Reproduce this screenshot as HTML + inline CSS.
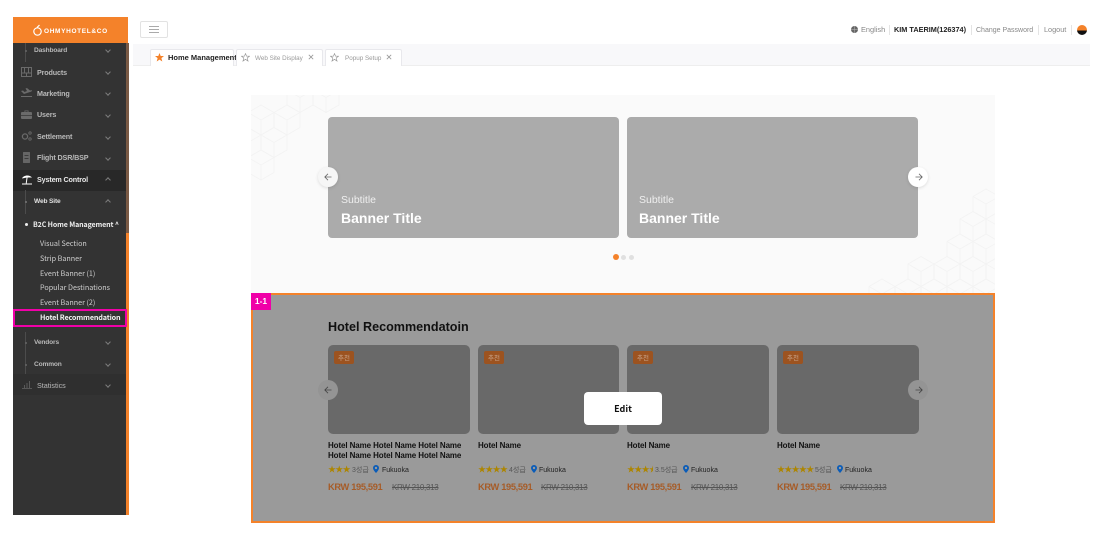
<!DOCTYPE html>
<html>
<head>
<meta charset="utf-8">
<style>
html,body{margin:0;padding:0;background:#fff;}
body{width:1102px;height:546px;position:relative;overflow:hidden;font-family:"Liberation Sans","Noto Sans CJK KR",sans-serif;}
.a{position:absolute;white-space:nowrap;}
.m{position:absolute;white-space:nowrap;color:#b8b8b8;font-size:7.2px;font-weight:bold;line-height:10px;letter-spacing:-.15px;}
.s{font-size:6.6px;font-weight:bold;letter-spacing:-.15px;}
.n{position:absolute;left:40px;white-space:nowrap;color:#cfcfcf;font-family:"Noto Sans CJK KR",sans-serif;font-size:7.2px;line-height:10px;}
.chev{position:absolute;left:105.5px;width:3px;height:3px;border-right:1px solid #7c7c7c;border-bottom:1px solid #7c7c7c;transform:rotate(45deg);}
.chev.up{transform:rotate(225deg);}
.ic{position:absolute;left:21px;}
.tab{position:absolute;top:49px;height:17px;background:#fff;border:1px solid #e8e8ec;border-bottom:none;box-sizing:border-box;border-radius:2px 2px 0 0;}
.card{position:absolute;background:#ababab;border-radius:4px;width:291px;height:121px;top:117px;}
.hc{position:absolute;top:345px;width:142px;height:89px;background:#696969;border-radius:5px;}
.tag{position:absolute;top:351px;width:20px;height:13px;background:#9c5320;border-radius:2px;color:#c9a58c;font-size:6.5px;line-height:13px;text-align:center;font-family:"Noto Sans CJK KR",sans-serif;}
.hn{position:absolute;font-size:8px;letter-spacing:-.1px;font-weight:bold;color:#111;line-height:10px;white-space:nowrap;}
.st{position:absolute;top:465px;font-size:8px;line-height:10px;color:#ad8500;white-space:nowrap;letter-spacing:-.7px;}
.gr{position:absolute;top:466px;font-size:7px;line-height:10px;color:#555;font-family:"Liberation Sans","Noto Sans CJK KR",sans-serif;white-space:nowrap;}
.ci{position:absolute;top:466px;font-size:7px;line-height:10px;color:#222;white-space:nowrap;}
.pr{position:absolute;top:481px;font-size:9.3px;letter-spacing:-.35px;line-height:12px;font-weight:bold;color:#a65c28;white-space:nowrap;}
.op{position:absolute;top:482px;font-size:8px;letter-spacing:-.29px;line-height:12px;color:#555;text-decoration:line-through;white-space:nowrap;}
.circ{position:absolute;width:20px;height:20px;border-radius:50%;}
</style>
</head>
<body>

<!-- sidebar -->
<div class="a" style="left:13px;top:17px;width:113px;height:498px;background:#333;"></div>
<div class="a" style="left:13px;top:170px;width:113px;height:21px;background:#282828;"></div>
<div class="a" style="left:13px;top:374px;width:113px;height:21px;background:#2f2f2f;"></div>
<div class="a" style="left:126px;top:43px;width:3px;height:190px;background:#7a5a45;"></div>
<div class="a" style="left:126px;top:233px;width:3px;height:282px;background:#f4822a;"></div>
<div class="a" style="left:13px;top:17px;width:115px;height:26px;background:#f4822a;"></div>
<svg class="a" style="left:32px;top:24px;" width="11" height="13" fill="none" stroke="#fff" stroke-width="1.2"><circle cx="5.5" cy="7.5" r="3.7"/><path d="M5 3.5L7.5 1"/></svg>
<div class="a" style="left:44px;top:26.5px;color:#fff;font-size:6.5px;font-weight:bold;line-height:10px;letter-spacing:.65px;">OHMYHOTEL&amp;CO</div>

<div class="a" style="left:25px;top:43px;width:1px;height:19px;background:#4c4c4c;"></div>
<div class="a" style="left:25px;top:190px;width:1px;height:24px;background:#4c4c4c;"></div>
<div class="a" style="left:25px;top:332px;width:1px;height:42px;background:#4c4c4c;"></div>
<div class="a" style="left:25px;top:50px;width:2px;height:2px;border-radius:50%;background:#666;"></div>
<div class="a" style="left:25px;top:201px;width:2px;height:2px;border-radius:50%;background:#777;"></div>
<div class="a" style="left:25px;top:342px;width:2px;height:2px;border-radius:50%;background:#666;"></div>
<div class="a" style="left:25px;top:364px;width:2px;height:2px;border-radius:50%;background:#666;"></div>

<div class="m s" style="left:34px;top:46px;">Dashboard</div><div class="chev" style="top:48px;"></div>

<svg class="ic" style="top:67px;" width="11" height="10" fill="none" stroke="#6a6a6a"><path d="M.5.5H10.5V9.5H.5Z"/><path d="M3.5 1V6M7.5 1V6M1 6H10M5.5 6V9" /></svg>
<div class="m" style="left:37px;top:68px;">Products</div><div class="chev" style="top:70px;"></div>

<svg class="ic" style="top:88px;" width="11" height="10" fill="#6a6a6a"><path d="M0 3L2 2.5L3.5 4L6 3L4.5 .5L6 0L9 2.5L11 2L10.5 3.5L3 6L0 3Z"/><rect y="8" width="11" height="1"/></svg>
<div class="m" style="left:37px;top:88.5px;">Marketing</div><div class="chev" style="top:91px;"></div>

<svg class="ic" style="top:110px;" width="11" height="9" fill="#6a6a6a"><rect y="2" width="11" height="7" rx="1"/><path d="M3.5 2V.5H7.5V2H6.7V1.2H4.3V2Z"/><rect y="5" width="11" height=".7" fill="#333"/></svg>
<div class="m" style="left:37px;top:110px;">Users</div><div class="chev" style="top:113px;"></div>

<svg class="ic" style="top:131px;" width="11" height="10" fill="none" stroke="#6a6a6a" stroke-width="1.3"><circle cx="4" cy="5.5" r="2.6"/><circle cx="9" cy="2" r="1.2" stroke-width=".9"/><circle cx="9" cy="8" r="1.2" stroke-width=".9"/></svg>
<div class="m" style="left:37px;top:131.5px;">Settlement</div><div class="chev" style="top:135px;"></div>

<svg class="ic" style="top:152px;left:23px;" width="7" height="11" fill="#666"><rect width="7" height="11" rx=".5"/><rect x="1.5" y="3" width="4" height=".8" fill="#333"/><rect x="1.5" y="6" width="4" height=".8" fill="#333"/></svg>
<div class="m" style="left:37px;top:152.5px;">Flight DSR/BSP</div><div class="chev" style="top:156px;"></div>

<svg class="a" style="left:21px;top:174px;" width="12" height="11" fill="#fff"><path d="M1 4.5C2 1.5 8 0 11 3.5L6 3.5Z"/><rect x="5.2" y="3" width="1" height="6.5" transform="rotate(8 5.7 6)"/><rect x="1" y="9.5" width="10" height="1"/></svg>
<div class="m" style="left:37px;top:175px;color:#e8e8e8;">System Control</div><div class="chev up" style="top:178px;"></div>

<div class="m s" style="left:34px;top:196.5px;color:#e0e0e0;">Web Site</div><div class="chev up" style="top:200px;"></div>
<div class="a" style="left:25px;top:223px;width:3px;height:3px;border-radius:50%;background:#eee;"></div>
<div class="n" style="left:33px;top:220px;color:#eee;font-weight:bold;font-size:7px;letter-spacing:-.1px;">B2C Home Management ^</div>
<div class="n" style="top:239px;">Visual Section</div>
<div class="n" style="top:254px;">Strip Banner</div>
<div class="n" style="top:269px;">Event Banner (1)</div>
<div class="n" style="top:283px;">Popular Destinations</div>
<div class="n" style="top:298px;">Event Banner (2)</div>
<div class="n" style="top:313px;color:#f2f2f2;font-weight:bold;font-size:7.2px;letter-spacing:-.15px;">Hotel Recommendation</div>
<div class="a" style="left:13px;top:309px;width:114px;height:18px;border:2px solid #f000a8;box-sizing:border-box;"></div>

<div class="m s" style="left:34px;top:337.5px;">Vendors</div><div class="chev" style="top:340px;"></div>
<div class="m s" style="left:34px;top:359.5px;">Common</div><div class="chev" style="top:362px;"></div>
<svg class="ic" style="top:380px;left:22px;" width="10" height="9" fill="none" stroke="#666" stroke-width=".8"><path d="M0 8.5H10M2.5 8V5M5 8V3M7.5 8V1"/></svg>
<div class="m" style="left:37px;top:380.5px;font-weight:normal;letter-spacing:0;">Statistics</div><div class="chev" style="top:383px;"></div>

<!-- topbar -->
<div class="a" style="left:140px;top:21px;width:28px;height:17px;border:1px solid #e2e2e2;border-radius:2px;box-sizing:border-box;"></div>
<div class="a" style="left:149px;top:26px;width:10px;height:1px;background:#aaa;"></div>
<div class="a" style="left:149px;top:29px;width:10px;height:1px;background:#aaa;"></div>
<div class="a" style="left:149px;top:32px;width:10px;height:1px;background:#aaa;"></div>

<svg class="a" style="left:851px;top:26px;" width="7" height="7" fill="#666"><circle cx="3.5" cy="3.5" r="3.5"/><path d="M0 3.5H7M3.5 0V7" stroke="#bbb" stroke-width=".5"/></svg>
<div class="a" style="left:861px;top:25px;font-size:7.4px;line-height:10px;color:#888;">English</div>
<div class="a" style="left:889px;top:25px;width:1px;height:10px;background:#e4e4e4;"></div>
<div class="a" style="left:894px;top:25px;font-size:7.3px;line-height:10px;font-weight:bold;color:#222;">KIM TAERIM(126374)</div>
<div class="a" style="left:971px;top:25px;width:1px;height:10px;background:#e4e4e4;"></div>
<div class="a" style="left:976px;top:26px;font-size:7px;line-height:10px;color:#888;">Change Password</div>
<div class="a" style="left:1038px;top:25px;width:1px;height:10px;background:#e4e4e4;"></div>
<div class="a" style="left:1044px;top:25px;font-size:7.3px;line-height:10px;color:#888;">Logout</div>
<div class="a" style="left:1071px;top:25px;width:1px;height:10px;background:#e4e4e4;"></div>
<div class="a" style="left:1077px;top:25px;width:10px;height:10px;border-radius:50%;background:linear-gradient(#f4822a 0,#f4822a 55%,#111 55%,#111 100%);"></div>

<!-- tabs -->
<div class="a" style="left:133px;top:44px;width:957px;height:22px;background:#f8f8fa;border-bottom:1px solid #eeeeee;box-sizing:border-box;"></div>
<div class="tab" style="left:150px;width:84px;"></div>
<svg class="a" style="left:155px;top:53px;" width="9" height="9" fill="#f4822a"><path d="M4.5 0L5.7 3H9L6.4 5.1L7.3 8.5L4.5 6.6L1.7 8.5L2.6 5.1L0 3H3.3Z"/></svg>
<div class="a" style="left:168px;top:53px;font-size:7.5px;line-height:10px;font-weight:bold;color:#222;">Home Management</div>
<div class="tab" style="left:236px;width:87px;"></div>
<svg class="a" style="left:241px;top:53px;" width="9" height="9" fill="none" stroke="#999" stroke-width=".7"><path d="M4.5 .6L5.6 3.2H8.5L6.2 5L7 8L4.5 6.3L2 8L2.8 5L.5 3.2H3.4Z"/></svg>
<div class="a" style="left:255px;top:53.5px;font-size:6.3px;line-height:10px;color:#999;">Web Site Display</div>
<svg class="a" style="left:308px;top:54px;" width="6" height="6" stroke="#999" stroke-width=".8"><path d="M.8 .8L5.2 5.2M5.2 .8L.8 5.2"/></svg>
<div class="tab" style="left:325px;width:77px;"></div>
<svg class="a" style="left:330px;top:53px;" width="9" height="9" fill="none" stroke="#999" stroke-width=".7"><path d="M4.5 .6L5.6 3.2H8.5L6.2 5L7 8L4.5 6.3L2 8L2.8 5L.5 3.2H3.4Z"/></svg>
<div class="a" style="left:345px;top:53.5px;font-size:6.3px;line-height:10px;color:#999;">Popup Setup</div>
<svg class="a" style="left:386px;top:54px;" width="6" height="6" stroke="#999" stroke-width=".8"><path d="M.8 .8L5.2 5.2M5.2 .8L.8 5.2"/></svg>

<!-- banner panel -->
<div class="a" style="left:251px;top:95px;width:744px;height:198px;background:#fafafa;overflow:hidden;">
<svg width="744" height="198" style="position:absolute;left:0;top:0;" fill="none" stroke="#f3f3f3" stroke-width=".8">
<defs><path id="cube" d="M0 -15L13 -7.5V7.5L0 15L-13 7.5V-7.5ZM0 0L13 -7.5M0 0L-13 -7.5M0 0V15"/></defs>
<use href="#cube" x="10" y="70"/><use href="#cube" x="23" y="47.5"/><use href="#cube" x="-3" y="47.5"/><use href="#cube" x="36" y="25"/><use href="#cube" x="10" y="25"/><use href="#cube" x="49" y="2.5"/><use href="#cube" x="75" y="2.5"/><use href="#cube" x="62" y="-20"/>
<use href="#cube" x="735" y="109"/><use href="#cube" x="722" y="131.5"/><use href="#cube" x="748" y="131.5"/><use href="#cube" x="709" y="154"/><use href="#cube" x="735" y="154"/><use href="#cube" x="670" y="176.5"/><use href="#cube" x="696" y="176.5"/><use href="#cube" x="722" y="176.5"/><use href="#cube" x="748" y="176.5"/><use href="#cube" x="631" y="199"/><use href="#cube" x="657" y="199"/><use href="#cube" x="683" y="199"/><use href="#cube" x="709" y="199"/><use href="#cube" x="735" y="199"/>
</svg>
</div>
<div class="card" style="left:328px;"></div>
<div class="card" style="left:627px;"></div>
<div class="a" style="left:341px;top:194px;font-size:10.5px;line-height:13px;color:#efefef;">Subtitle</div>
<div class="a" style="left:341px;top:210px;font-size:14px;line-height:16px;font-weight:bold;color:#fff;">Banner Title</div>
<div class="a" style="left:639px;top:194px;font-size:10.5px;line-height:13px;color:#efefef;">Subtitle</div>
<div class="a" style="left:639px;top:210px;font-size:14px;line-height:16px;font-weight:bold;color:#fff;">Banner Title</div>
<div class="circ" style="left:318px;top:167px;background:#f6f6f6;box-shadow:0 1px 3px rgba(0,0,0,.12);"></div>
<svg class="a" style="left:324px;top:173px;" width="8" height="8" fill="none" stroke="#666" stroke-width=".8"><path d="M7.5 4H.8M4 .8L.8 4L4 7.2"/></svg>
<div class="circ" style="left:908px;top:167px;background:#fff;box-shadow:0 1px 3px rgba(0,0,0,.12);"></div>
<svg class="a" style="left:915px;top:173px;" width="8" height="8" fill="none" stroke="#666" stroke-width=".8"><path d="M.5 4H7.2M4 .8L7.2 4L4 7.2"/></svg>
<div class="a" style="left:613px;top:254px;width:6px;height:6px;border-radius:50%;background:#f4822a;"></div>
<div class="a" style="left:621px;top:254.5px;width:5px;height:5px;border-radius:50%;background:#e0e0e0;"></div>
<div class="a" style="left:629px;top:254.5px;width:5px;height:5px;border-radius:50%;background:#e0e0e0;"></div>

<!-- recommendation panel -->
<div class="a" style="left:251px;top:293px;width:744px;height:230px;background:#9a9a9a;border:2px solid #f4822a;box-sizing:border-box;"></div>
<div class="a" style="left:251px;top:293px;width:20px;height:17px;background:#f000a8;color:#fff;font-size:8.5px;font-weight:bold;line-height:16px;text-align:center;">1-1</div>
<div class="a" style="left:328px;top:319px;font-size:12.6px;line-height:16px;font-weight:bold;color:#111;">Hotel Recommendatoin</div>

<div class="hc" style="left:328px;"></div>
<div class="hc" style="left:478px;width:141px;"></div>
<div class="hc" style="left:627px;"></div>
<div class="hc" style="left:777px;"></div>
<div class="tag" style="left:334px;">추천</div>
<div class="tag" style="left:484px;">추천</div>
<div class="tag" style="left:633px;">추천</div>
<div class="tag" style="left:783px;">추천</div>

<div class="circ" style="left:318px;top:380px;background:#949494;"></div>
<svg class="a" style="left:324px;top:386px;" width="8" height="8" fill="none" stroke="#444" stroke-width=".8"><path d="M7.5 4H.8M4 .8L.8 4L4 7.2"/></svg>
<div class="circ" style="left:908px;top:380px;background:#949494;"></div>
<svg class="a" style="left:915px;top:386px;" width="8" height="8" fill="none" stroke="#444" stroke-width=".8"><path d="M.5 4H7.2M4 .8L7.2 4L4 7.2"/></svg>

<div class="hn" style="left:328px;top:441px;">Hotel Name Hotel Name Hotel Name</div>
<div class="hn" style="left:328px;top:451px;">Hotel Name Hotel Name Hotel Name</div>
<div class="hn" style="left:478px;top:441px;">Hotel Name</div>
<div class="hn" style="left:627px;top:441px;">Hotel Name</div>
<div class="hn" style="left:777px;top:441px;">Hotel Name</div>

<div class="st" style="left:328px;">★★★</div><div class="gr" style="left:352px;">3성급</div>
<svg class="a" style="left:373px;top:465px;" width="6" height="8"><path d="M3 0a3 3 0 0 1 3 3c0 2-3 5-3 5S0 5 0 3a3 3 0 0 1 3-3z" fill="#0a5cb8"/><circle cx="3" cy="3" r="1.2" fill="#9a9a9a"/></svg>
<div class="ci" style="left:382px;">Fukuoka</div>

<div class="st" style="left:478px;">★★★★</div><div class="gr" style="left:509px;">4성급</div>
<svg class="a" style="left:531px;top:465px;" width="6" height="8"><path d="M3 0a3 3 0 0 1 3 3c0 2-3 5-3 5S0 5 0 3a3 3 0 0 1 3-3z" fill="#0a5cb8"/><circle cx="3" cy="3" r="1.2" fill="#9a9a9a"/></svg>
<div class="ci" style="left:539px;">Fukuoka</div>

<div class="st" style="left:627px;">★★★</div><div class="a" style="left:649px;top:465px;width:4px;overflow:hidden;font-size:8px;line-height:10px;color:#ad8500;">★</div><div class="gr" style="left:655px;">3.5성급</div>
<svg class="a" style="left:683px;top:465px;" width="6" height="8"><path d="M3 0a3 3 0 0 1 3 3c0 2-3 5-3 5S0 5 0 3a3 3 0 0 1 3-3z" fill="#0a5cb8"/><circle cx="3" cy="3" r="1.2" fill="#9a9a9a"/></svg>
<div class="ci" style="left:691px;">Fukuoka</div>

<div class="st" style="left:777px;">★★★★★</div><div class="gr" style="left:815px;">5성급</div>
<svg class="a" style="left:837px;top:465px;" width="6" height="8"><path d="M3 0a3 3 0 0 1 3 3c0 2-3 5-3 5S0 5 0 3a3 3 0 0 1 3-3z" fill="#0a5cb8"/><circle cx="3" cy="3" r="1.2" fill="#9a9a9a"/></svg>
<div class="ci" style="left:845px;">Fukuoka</div>

<div class="pr" style="left:328px;">KRW 195,591</div><div class="op" style="left:392px;">KRW 210,313</div>
<div class="pr" style="left:478px;">KRW 195,591</div><div class="op" style="left:541px;">KRW 210,313</div>
<div class="pr" style="left:627px;">KRW 195,591</div><div class="op" style="left:691px;">KRW 210,313</div>
<div class="pr" style="left:777px;">KRW 195,591</div><div class="op" style="left:840px;">KRW 210,313</div>

<div class="a" style="left:584px;top:392px;width:78px;height:33px;background:#fff;border-radius:4px;text-align:center;font-family:'Noto Sans CJK KR',sans-serif;font-size:9px;font-weight:bold;line-height:33px;color:#111;">Edit</div>

</body>
</html>
